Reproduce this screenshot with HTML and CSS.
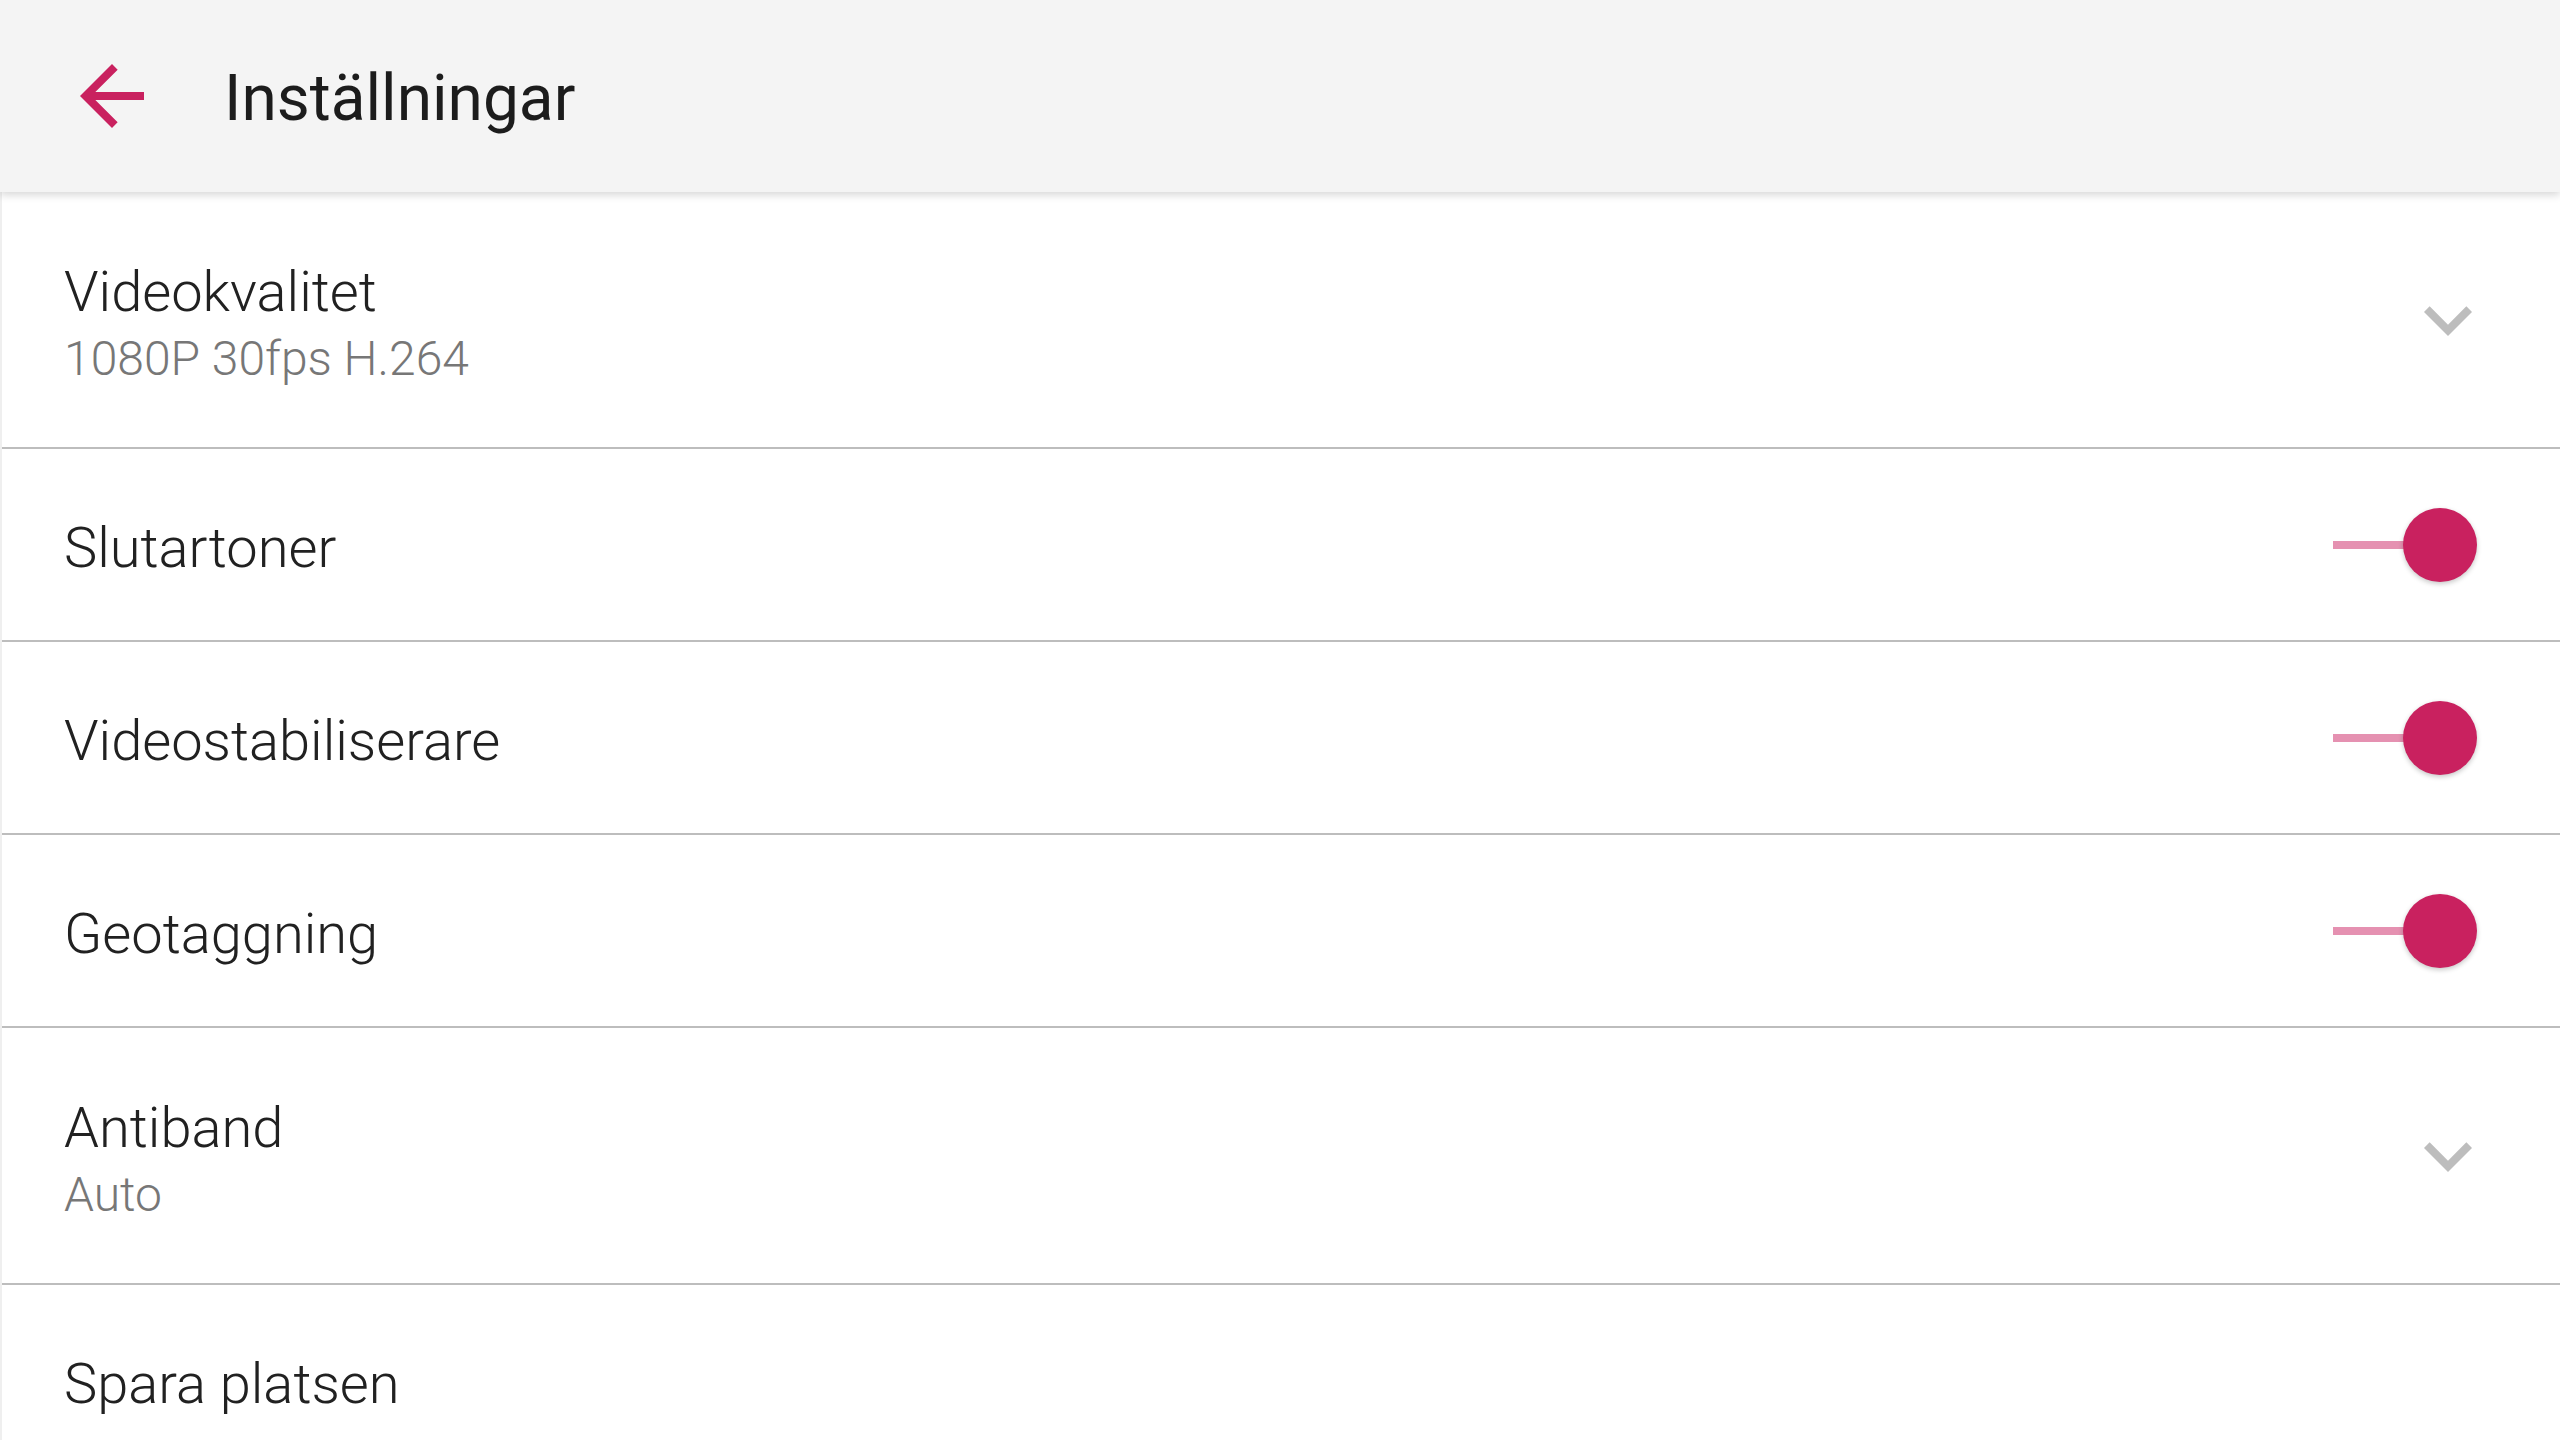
FILE: index.html
```html
<!DOCTYPE html>
<html lang="sv">
<head>
<meta charset="utf-8">
<title>Inställningar</title>
<link rel="stylesheet" href="styles.css">
</head>
<body>
<header class="appbar">
  <svg class="back" viewBox="0 0 24 24" width="96" height="96" aria-hidden="true">
    <path d="M20 11H7.83l5.59-5.59L12 4l-8 8 8 8 1.41-1.41L7.83 13H20v-2z"/>
  </svg>
  <h1 class="title">Inställningar</h1>
</header>
<main class="list">
  <div class="row row-double">
    <div class="texts">
      <div class="label">Videokvalitet</div>
      <div class="sub">1080P 30fps H.264</div>
    </div>
    <svg class="chevron" viewBox="0 0 24 24" width="96" height="96" aria-hidden="true">
      <path d="M16.59 8.59L12 13.17 7.41 8.59 6 10l6 6 6-6z"/>
    </svg>
  </div>
  <div class="row">
    <div class="label single">Slutartoner</div>
    <div class="switch"><span class="track"></span><span class="thumb"></span></div>
  </div>
  <div class="row">
    <div class="label single">Videostabiliserare</div>
    <div class="switch"><span class="track"></span><span class="thumb"></span></div>
  </div>
  <div class="row">
    <div class="label single">Geotaggning</div>
    <div class="switch"><span class="track"></span><span class="thumb"></span></div>
  </div>
  <div class="row row-double">
    <div class="texts">
      <div class="label">Antiband</div>
      <div class="sub">Auto</div>
    </div>
    <svg class="chevron" viewBox="0 0 24 24" width="96" height="96" aria-hidden="true">
      <path d="M16.59 8.59L12 13.17 7.41 8.59 6 10l6 6 6-6z"/>
    </svg>
  </div>
  <div class="row">
    <div class="label single">Spara platsen</div>
  </div>
</main>
</body>
</html>
```

FILE: styles.css
```css
html, body {
  margin: 0;
  padding: 0;
  height: 100%;
  overflow: hidden;
  background: #ffffff;
}

body {
  font-family: Roboto, "Noto Sans", "Liberation Sans", sans-serif;
  color: #212121;
}

.appbar {
  position: relative;
  z-index: 2;
  height: 192px;
  box-sizing: border-box;
  display: flex;
  align-items: center;
  padding-left: 64px;
  background: #f4f4f4;
  box-shadow: 0 3px 8px rgba(0, 0, 0, 0.16);
}

.back {
  flex: none;
  fill: #c9215f;
}

.title {
  margin: 0 0 0 64px;
  padding-top: 6px;
  font-size: 64px;
  font-weight: 400;
  line-height: 1;
  color: #1c1c1c;
}

.list {
  border-left: 2px solid #efefef;
}

.row {
  height: 193px;
  box-sizing: border-box;
  display: flex;
  align-items: center;
  justify-content: space-between;
  padding-left: 62px;
  border-bottom: 2px solid #bdbdbd;
}

.row-double {
  height: 257px;
}

.texts {
  display: flex;
  flex-direction: column;
  padding-top: 8px;
}

.label {
  font-size: 56px;
  font-weight: 300;
  line-height: 70px;
  color: #212121;
}

.label.single {
  padding-top: 6px;
}

.sub {
  font-size: 48px;
  font-weight: 300;
  line-height: 64px;
  color: #777777;
}

.chevron {
  flex: none;
  margin-right: 64px;
  fill: #bdbdbd;
}

.switch {
  flex: none;
  display: grid;
  align-items: center;
  width: 144px;
  height: 80px;
  margin-right: 83px;
}

.track {
  grid-area: 1 / 1;
  justify-self: start;
  width: 110px;
  height: 8px;
  background: #e591b1;
}

.thumb {
  grid-area: 1 / 1;
  justify-self: end;
  width: 74px;
  height: 74px;
  border-radius: 50%;
  background: #c9215f;
  box-shadow: 0 2px 5px rgba(0, 0, 0, 0.22);
}
```
